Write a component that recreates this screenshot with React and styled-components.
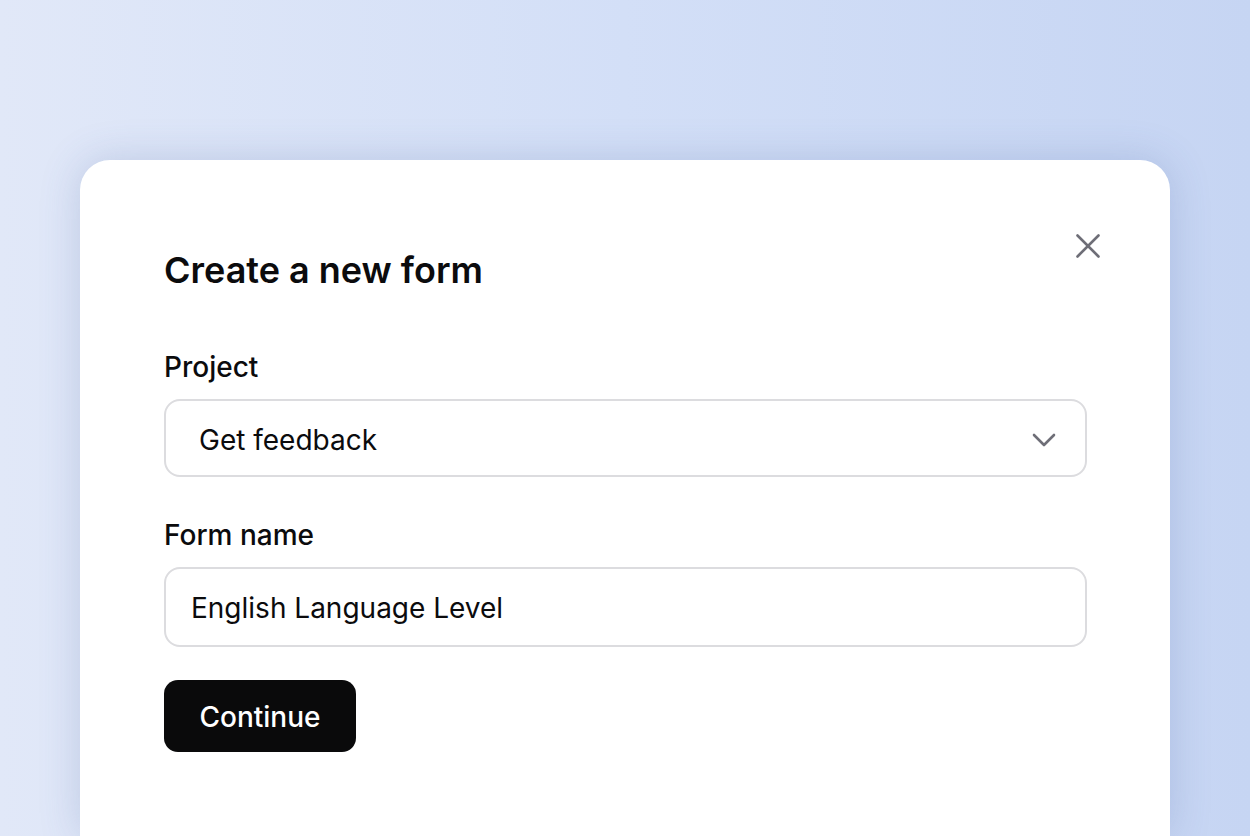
import React, { useState } from 'react';
import styled, { createGlobalStyle } from 'styled-components';

const GlobalStyle = createGlobalStyle`
    html, body {
        margin: 0;
        padding: 0;
        height: 100%;
        overflow: hidden;
    }
    body {
        font-family: Inter, "Noto Sans", sans-serif;
        background: linear-gradient(90deg, #e1e8f8 0%, #d3dff7 50%, #c6d5f3 100%);
    }
`

const Page = styled.div`
    height: 836px;
    padding: 160px 80px 0;
    box-sizing: border-box;
`

const Card = styled.div`
    position: relative;
    height: 676px;
    background: #fff;
    border-radius: 30px 30px 0 0;
    box-shadow: 0 0 40px rgba(70, 95, 160, 0.22);
    padding: 88px 83px 0 84px;
    box-sizing: border-box;
`

const Title = styled.h2`
    margin: 0 0 58px;
    font-size: 36px;
    line-height: 44px;
    font-weight: 600;
    color: #0b0b0d;
`

const CloseButton = styled.button`
    position: absolute;
    top: 74px;
    right: 70px;
    width: 24px;
    height: 24px;
    padding: 0;
    border: 0;
    background: transparent;
    cursor: pointer;
    display: flex;
`

const Field = styled.div`
    display: flex;
    flex-direction: column;
    gap: 15px;
    margin-bottom: ${p => p.$gap || 0}px;
`

const Label = styled.label`
    font-size: 28px;
    line-height: 34px;
    font-weight: 500;
    color: #0b0b0d;
`

const SelectBox = styled.div`
    height: 78px;
    box-sizing: border-box;
    border: 2px solid #dcdcdf;
    border-radius: 16px;
    display: flex;
    align-items: center;
    justify-content: space-between;
    padding: 3px 29px 0 33px;
    font-size: 28px;
    color: #0b0b0d;
    cursor: pointer;
`

const TextInput = styled.input`
    height: 80px;
    box-sizing: border-box;
    border: 2px solid #dcdcdf;
    border-radius: 16px;
    padding: 2px 25px 0;
    font-family: inherit;
    font-size: 28px;
    color: #0b0b0d;
    outline: none;
`

const PrimaryButton = styled.button`
    width: 192px;
    height: 72px;
    border: 0;
    border-radius: 14px;
    background: #0a0a0b;
    color: #fff;
    font-family: inherit;
    font-size: 28px;
    font-weight: 500;
    padding-top: 2px;
    cursor: pointer;
`

const App = () => {
    const [formName, setFormName] = useState('English Language Level');

    return (
        <>
            <GlobalStyle />
            <Page>
                <Card>
                    <CloseButton aria-label="Close">
                        <svg width="24" height="24" viewBox="0 0 24 24" fill="none" stroke="#6e6e77" strokeWidth="2.6" strokeLinecap="round">
                            <path d="M1.5 1.5 L22.5 22.5 M22.5 1.5 L1.5 22.5" />
                        </svg>
                    </CloseButton>
                    <Title>Create a new form</Title>
                    <Field $gap={41}>
                        <Label>Project</Label>
                        <SelectBox>
                            <span>Get feedback</span>
                            <svg width="24" height="14" viewBox="0 0 24 14" fill="none" stroke="#6e6e77" strokeWidth="2.6" strokeLinecap="round" strokeLinejoin="round">
                                <path d="M2 2 L12 12 L22 2" />
                            </svg>
                        </SelectBox>
                    </Field>
                    <Field $gap={33}>
                        <Label>Form name</Label>
                        <TextInput value={formName} onChange={(e) => setFormName(e.target.value)} spellCheck="false" />
                    </Field>
                    <PrimaryButton>Continue</PrimaryButton>
                </Card>
            </Page>
        </>
    );
};

export default App;
